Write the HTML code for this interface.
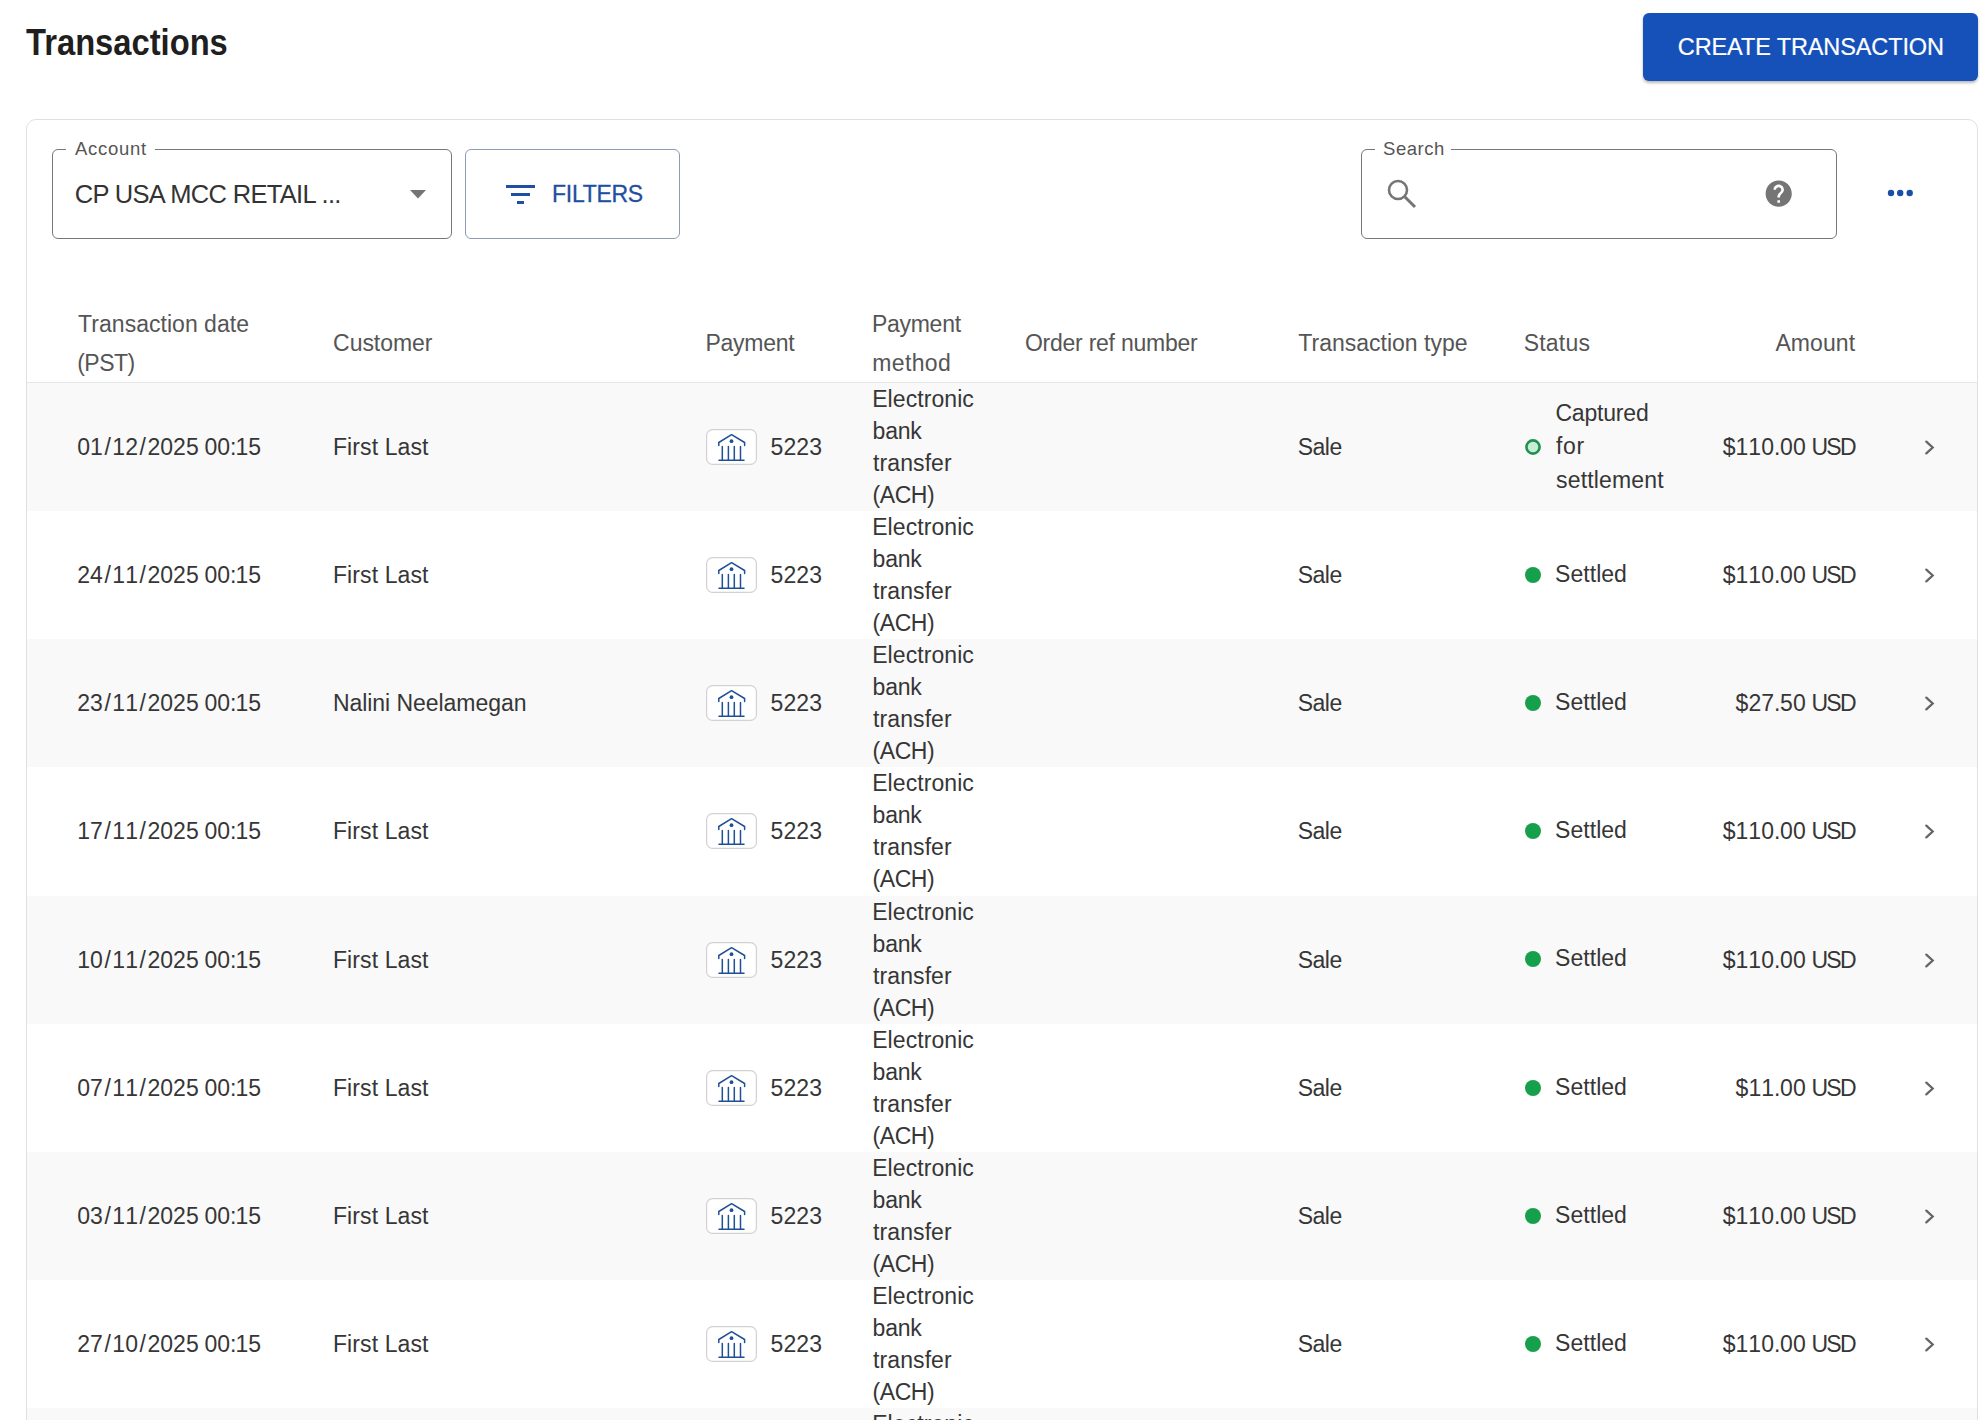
<!DOCTYPE html>
<html><head><meta charset="utf-8">
<style>
*{margin:0;padding:0;box-sizing:border-box}
html,body{width:1980px;height:1420px;overflow:hidden;background:#fff}
body{font-family:"Liberation Sans",sans-serif;color:#333;position:relative}
.a{position:absolute;white-space:nowrap}
</style></head><body>
<div class="a" style="left:25.60px;top:14.35px;font-size:36.5px;line-height:58px;color:#1f1f1f;font-weight:bold;transform:scaleX(0.8961);transform-origin:0.40px 0">Transactions</div>
<div class="a" style="left:1643px;top:13px;width:335px;height:68px;background:#1551b9;border-radius:6px;box-shadow:0 2px 3px rgba(0,0,0,.28)"></div>
<div class="a" style="left:1677.80px;top:27.85px;font-size:23.5px;line-height:38px;color:#fff;letter-spacing:-0.112px;-webkit-text-stroke:.2px #fff">CREATE TRANSACTION</div>
<div class="a" style="left:26px;top:119px;width:1952px;height:1400px;border:1px solid #e0e0e0;border-radius:10px;background:#fff"></div>
<div class="a" style="left:52px;top:149px;width:400px;height:90px;border:1.5px solid #777;border-radius:6px"></div>
<div class="a" style="left:66px;top:145px;width:89px;height:8px;background:#fff"></div>
<div class="a" style="left:75.00px;top:133.59px;font-size:18.5px;line-height:30px;color:#555;letter-spacing:0.733px">Account</div>
<div class="a" style="left:74.70px;top:173.66px;font-size:25.5px;line-height:41px;color:#333;letter-spacing:-0.670px">CP USA MCC RETAIL ...</div>
<svg class="a" style="left:410px;top:190px" width="16" height="9"><path d="M0 0H16L8 8.5Z" fill="#757575"/></svg>
<div class="a" style="left:465px;top:149px;width:215px;height:90px;border:1.5px solid #8c9cb2;border-radius:6px"></div>
<svg class="a" style="left:505px;top:184px" width="32" height="22"><g fill="#1f4fa0"><rect x="1" y="1" width="29" height="3"/><rect x="6" y="9" width="19" height="3"/><rect x="12" y="17" width="7" height="3"/></g></svg>
<div class="a" style="left:552.10px;top:175.53px;font-size:23px;line-height:37px;color:#1f4fa0;letter-spacing:-0.300px;-webkit-text-stroke:.3px #1f4fa0">FILTERS</div>
<div class="a" style="left:1361px;top:149px;width:476px;height:90px;border:1.5px solid #777;border-radius:6px"></div>
<div class="a" style="left:1375px;top:145px;width:76px;height:8px;background:#fff"></div>
<div class="a" style="left:1383.10px;top:133.59px;font-size:18.5px;line-height:30px;color:#555;letter-spacing:0.520px">Search</div>
<svg class="a" style="left:1385px;top:177px" width="34" height="34" viewBox="0 0 34 34"><circle cx="13" cy="13" r="9" fill="none" stroke="#757575" stroke-width="2.6"/><path d="M19.5 19.5L30 30" stroke="#757575" stroke-width="3"/></svg>
<svg class="a" style="left:1763.3px;top:178.3px" width="31.4" height="31.4" viewBox="0 0 24 24"><path fill="#757575" d="M12 2C6.48 2 2 6.48 2 12s4.48 10 10 10 10-4.48 10-10S17.52 2 12 2zm1 17h-2v-2h2v2zm2.07-7.75l-.9.92C13.45 12.9 13 13.5 13 15h-2v-.5c0-1.1.45-2.1 1.17-2.830l1.24-1.26c.37-.36.59-.86.59-1.41 0-1.1-.9-2-2-2s-2 .9-2 2H8c0-2.21 1.79-4 4-4s4 1.79 4 4c0 .88-.36 1.68-.93 2.25z"/></svg>
<svg class="a" style="left:1880px;top:185px" width="40" height="16"><g fill="#1a4fa8"><circle cx="11" cy="8" r="3.2"/><circle cx="20.2" cy="8" r="3.2"/><circle cx="29.7" cy="8" r="3.2"/></g></svg>
<div class="a" style="left:78.10px;top:305.53px;font-size:23px;line-height:37px;color:#555;letter-spacing:0.027px">Transaction date</div>
<div class="a" style="left:77.20px;top:344.53px;font-size:23px;line-height:37px;color:#555;letter-spacing:-0.525px">(PST)</div>
<div class="a" style="left:333.10px;top:324.53px;font-size:23px;line-height:37px;color:#555;letter-spacing:-0.043px">Customer</div>
<div class="a" style="left:705.50px;top:324.53px;font-size:23px;line-height:37px;color:#555;letter-spacing:-0.267px">Payment</div>
<div class="a" style="left:871.90px;top:305.53px;font-size:23px;line-height:37px;color:#555;letter-spacing:-0.267px">Payment</div>
<div class="a" style="left:872.30px;top:344.53px;font-size:23px;line-height:37px;color:#555;letter-spacing:0.360px">method</div>
<div class="a" style="left:1024.90px;top:324.53px;font-size:23px;line-height:37px;color:#555;letter-spacing:-0.240px">Order ref number</div>
<div class="a" style="left:1298.30px;top:324.53px;font-size:23px;line-height:37px;color:#555">Transaction type</div>
<div class="a" style="left:1523.70px;top:324.53px;font-size:23px;line-height:37px;color:#555;letter-spacing:0.200px">Status</div>
<div class="a" style="left:1775.40px;top:324.53px;font-size:23px;line-height:37px;color:#555;letter-spacing:0.080px">Amount</div>
<div class="a" style="left:27px;top:382px;width:1950px;height:1px;background:#e6e6e6"></div>
<div class="a" style="left:27px;top:383.0px;width:1950px;height:128px;background:#f9f9f9"></div>
<div class="a" style="left:77.20px;top:428.53px;font-size:23px;line-height:37px;color:#363636"><span style="display:inline-block;width:12.858px;text-align:center">0</span><span style="display:inline-block;width:12.858px;text-align:center">1</span><span style="display:inline-block;width:9.414px;text-align:center">/</span><span style="display:inline-block;width:12.858px;text-align:center">1</span><span style="display:inline-block;width:12.858px;text-align:center">2</span><span style="display:inline-block;width:9.414px;text-align:center">/</span><span style="display:inline-block;width:12.858px;text-align:center">2</span><span style="display:inline-block;width:12.858px;text-align:center">0</span><span style="display:inline-block;width:12.858px;text-align:center">2</span><span style="display:inline-block;width:12.858px;text-align:center">5</span><span style="display:inline-block;width:5.670px;text-align:center">&nbsp;</span><span style="display:inline-block;width:12.858px;text-align:center">0</span><span style="display:inline-block;width:12.858px;text-align:center">0</span><span style="display:inline-block;width:5.411px;text-align:center">:</span><span style="display:inline-block;width:12.858px;text-align:center">1</span><span style="display:inline-block;width:12.858px;text-align:center">5</span></div>
<div class="a" style="left:332.95px;top:428.53px;font-size:23px;line-height:37px;color:#363636;letter-spacing:0.111px">First Last</div>
<svg class="a" style="left:706px;top:429px" width="51" height="36" viewBox="0 0 51 36"><rect x="0.6" y="0.6" width="49.8" height="34.8" rx="6" fill="#fff" stroke="#d2d2d2" stroke-width="1.2"/><g fill="none" stroke="#1f4f96" stroke-width="1.5" stroke-linecap="round" stroke-linejoin="round"><path d="M12.8 16.6V13.5L25.6 5.7L38.6 13.5V16.6"/><path d="M13 31.3H38M16.3 17.6V31M22.4 17.6V31M28.3 17.6V31M34.5 17.6V31"/></g><circle cx="25.5" cy="12.2" r="1.9" fill="#1f4f96"/></svg>
<div class="a" style="left:770.60px;top:428.53px;font-size:23px;line-height:37px;color:#363636"><span style="display:inline-block;width:12.858px;text-align:center">5</span><span style="display:inline-block;width:12.858px;text-align:center">2</span><span style="display:inline-block;width:12.858px;text-align:center">2</span><span style="display:inline-block;width:12.858px;text-align:center">3</span></div>
<div class="a" style="left:872.20px;top:380.53px;font-size:23px;line-height:37px;color:#363636;letter-spacing:0.078px">Electronic</div>
<div class="a" style="left:872.60px;top:412.53px;font-size:23px;line-height:37px;color:#363636;letter-spacing:-0.200px">bank</div>
<div class="a" style="left:873.00px;top:444.53px;font-size:23px;line-height:37px;color:#363636;letter-spacing:0.100px">transfer</div>
<div class="a" style="left:872.60px;top:476.53px;font-size:23px;line-height:37px;color:#363636;letter-spacing:-0.475px">(ACH)</div>
<div class="a" style="left:1297.70px;top:428.53px;font-size:23px;line-height:37px;color:#363636;letter-spacing:-0.500px">Sale</div>
<svg class="a" style="left:1524px;top:438px" width="18" height="18"><circle cx="9" cy="9" r="6.6" fill="#c9ecd5" stroke="#1f9150" stroke-width="2.6"/></svg>
<div class="a" style="left:1555.40px;top:394.53px;font-size:23px;line-height:37px;color:#363636;letter-spacing:-0.186px">Captured</div>
<div class="a" style="left:1555.90px;top:427.53px;font-size:23px;line-height:37px;color:#363636;letter-spacing:0.700px">for</div>
<div class="a" style="left:1556.00px;top:461.53px;font-size:23px;line-height:37px;color:#363636;letter-spacing:0.167px">settlement</div>
<div class="a" style="left:1722.67px;top:428.53px;font-size:23px;line-height:37px;color:#363636"><span style="display:inline-block;width:12.858px;text-align:center">$</span><span style="display:inline-block;width:12.858px;text-align:center">1</span><span style="display:inline-block;width:12.858px;text-align:center">1</span><span style="display:inline-block;width:12.858px;text-align:center">0</span><span style="display:inline-block;width:6.027px;text-align:center">.</span><span style="display:inline-block;width:12.858px;text-align:center">0</span><span style="display:inline-block;width:12.858px;text-align:center">0</span><span style="display:inline-block;width:5.670px;text-align:center">&nbsp;</span><span style="display:inline-block;width:14.782px;text-align:center">U</span><span style="display:inline-block;width:13.777px;text-align:center">S</span><span style="display:inline-block;width:15.219px;text-align:center">D</span></div>
<svg class="a" style="left:1923px;top:439px" width="14" height="17"><path d="M3.3 2.6L9.7 8.5L3.3 14.4" fill="none" stroke="#666" stroke-width="2.3" stroke-linecap="round"/></svg>
<div class="a" style="left:77.20px;top:556.53px;font-size:23px;line-height:37px;color:#363636"><span style="display:inline-block;width:12.858px;text-align:center">2</span><span style="display:inline-block;width:12.858px;text-align:center">4</span><span style="display:inline-block;width:9.414px;text-align:center">/</span><span style="display:inline-block;width:12.858px;text-align:center">1</span><span style="display:inline-block;width:12.858px;text-align:center">1</span><span style="display:inline-block;width:9.414px;text-align:center">/</span><span style="display:inline-block;width:12.858px;text-align:center">2</span><span style="display:inline-block;width:12.858px;text-align:center">0</span><span style="display:inline-block;width:12.858px;text-align:center">2</span><span style="display:inline-block;width:12.858px;text-align:center">5</span><span style="display:inline-block;width:5.670px;text-align:center">&nbsp;</span><span style="display:inline-block;width:12.858px;text-align:center">0</span><span style="display:inline-block;width:12.858px;text-align:center">0</span><span style="display:inline-block;width:5.411px;text-align:center">:</span><span style="display:inline-block;width:12.858px;text-align:center">1</span><span style="display:inline-block;width:12.858px;text-align:center">5</span></div>
<div class="a" style="left:332.95px;top:556.53px;font-size:23px;line-height:37px;color:#363636;letter-spacing:0.111px">First Last</div>
<svg class="a" style="left:706px;top:557px" width="51" height="36" viewBox="0 0 51 36"><rect x="0.6" y="0.6" width="49.8" height="34.8" rx="6" fill="#fff" stroke="#d2d2d2" stroke-width="1.2"/><g fill="none" stroke="#1f4f96" stroke-width="1.5" stroke-linecap="round" stroke-linejoin="round"><path d="M12.8 16.6V13.5L25.6 5.7L38.6 13.5V16.6"/><path d="M13 31.3H38M16.3 17.6V31M22.4 17.6V31M28.3 17.6V31M34.5 17.6V31"/></g><circle cx="25.5" cy="12.2" r="1.9" fill="#1f4f96"/></svg>
<div class="a" style="left:770.60px;top:556.53px;font-size:23px;line-height:37px;color:#363636"><span style="display:inline-block;width:12.858px;text-align:center">5</span><span style="display:inline-block;width:12.858px;text-align:center">2</span><span style="display:inline-block;width:12.858px;text-align:center">2</span><span style="display:inline-block;width:12.858px;text-align:center">3</span></div>
<div class="a" style="left:872.20px;top:508.53px;font-size:23px;line-height:37px;color:#363636;letter-spacing:0.078px">Electronic</div>
<div class="a" style="left:872.60px;top:540.53px;font-size:23px;line-height:37px;color:#363636;letter-spacing:-0.200px">bank</div>
<div class="a" style="left:873.00px;top:572.53px;font-size:23px;line-height:37px;color:#363636;letter-spacing:0.100px">transfer</div>
<div class="a" style="left:872.60px;top:604.53px;font-size:23px;line-height:37px;color:#363636;letter-spacing:-0.475px">(ACH)</div>
<div class="a" style="left:1297.70px;top:556.53px;font-size:23px;line-height:37px;color:#363636;letter-spacing:-0.500px">Sale</div>
<svg class="a" style="left:1524px;top:566px" width="18" height="18"><circle cx="9" cy="9" r="8" fill="#17a04b"/></svg>
<div class="a" style="left:1555.10px;top:555.53px;font-size:23px;line-height:37px;color:#363636;letter-spacing:0.033px">Settled</div>
<div class="a" style="left:1722.67px;top:556.53px;font-size:23px;line-height:37px;color:#363636"><span style="display:inline-block;width:12.858px;text-align:center">$</span><span style="display:inline-block;width:12.858px;text-align:center">1</span><span style="display:inline-block;width:12.858px;text-align:center">1</span><span style="display:inline-block;width:12.858px;text-align:center">0</span><span style="display:inline-block;width:6.027px;text-align:center">.</span><span style="display:inline-block;width:12.858px;text-align:center">0</span><span style="display:inline-block;width:12.858px;text-align:center">0</span><span style="display:inline-block;width:5.670px;text-align:center">&nbsp;</span><span style="display:inline-block;width:14.782px;text-align:center">U</span><span style="display:inline-block;width:13.777px;text-align:center">S</span><span style="display:inline-block;width:15.219px;text-align:center">D</span></div>
<svg class="a" style="left:1923px;top:567px" width="14" height="17"><path d="M3.3 2.6L9.7 8.5L3.3 14.4" fill="none" stroke="#666" stroke-width="2.3" stroke-linecap="round"/></svg>
<div class="a" style="left:27px;top:639.25px;width:1950px;height:128px;background:#f9f9f9"></div>
<div class="a" style="left:77.20px;top:684.53px;font-size:23px;line-height:37px;color:#363636"><span style="display:inline-block;width:12.858px;text-align:center">2</span><span style="display:inline-block;width:12.858px;text-align:center">3</span><span style="display:inline-block;width:9.414px;text-align:center">/</span><span style="display:inline-block;width:12.858px;text-align:center">1</span><span style="display:inline-block;width:12.858px;text-align:center">1</span><span style="display:inline-block;width:9.414px;text-align:center">/</span><span style="display:inline-block;width:12.858px;text-align:center">2</span><span style="display:inline-block;width:12.858px;text-align:center">0</span><span style="display:inline-block;width:12.858px;text-align:center">2</span><span style="display:inline-block;width:12.858px;text-align:center">5</span><span style="display:inline-block;width:5.670px;text-align:center">&nbsp;</span><span style="display:inline-block;width:12.858px;text-align:center">0</span><span style="display:inline-block;width:12.858px;text-align:center">0</span><span style="display:inline-block;width:5.411px;text-align:center">:</span><span style="display:inline-block;width:12.858px;text-align:center">1</span><span style="display:inline-block;width:12.858px;text-align:center">5</span></div>
<div class="a" style="left:332.95px;top:684.53px;font-size:23px;line-height:37px;color:#363636;letter-spacing:-0.050px">Nalini Neelamegan</div>
<svg class="a" style="left:706px;top:685px" width="51" height="36" viewBox="0 0 51 36"><rect x="0.6" y="0.6" width="49.8" height="34.8" rx="6" fill="#fff" stroke="#d2d2d2" stroke-width="1.2"/><g fill="none" stroke="#1f4f96" stroke-width="1.5" stroke-linecap="round" stroke-linejoin="round"><path d="M12.8 16.6V13.5L25.6 5.7L38.6 13.5V16.6"/><path d="M13 31.3H38M16.3 17.6V31M22.4 17.6V31M28.3 17.6V31M34.5 17.6V31"/></g><circle cx="25.5" cy="12.2" r="1.9" fill="#1f4f96"/></svg>
<div class="a" style="left:770.60px;top:684.53px;font-size:23px;line-height:37px;color:#363636"><span style="display:inline-block;width:12.858px;text-align:center">5</span><span style="display:inline-block;width:12.858px;text-align:center">2</span><span style="display:inline-block;width:12.858px;text-align:center">2</span><span style="display:inline-block;width:12.858px;text-align:center">3</span></div>
<div class="a" style="left:872.20px;top:636.53px;font-size:23px;line-height:37px;color:#363636;letter-spacing:0.078px">Electronic</div>
<div class="a" style="left:872.60px;top:668.53px;font-size:23px;line-height:37px;color:#363636;letter-spacing:-0.200px">bank</div>
<div class="a" style="left:873.00px;top:700.53px;font-size:23px;line-height:37px;color:#363636;letter-spacing:0.100px">transfer</div>
<div class="a" style="left:872.60px;top:732.53px;font-size:23px;line-height:37px;color:#363636;letter-spacing:-0.475px">(ACH)</div>
<div class="a" style="left:1297.70px;top:684.53px;font-size:23px;line-height:37px;color:#363636;letter-spacing:-0.500px">Sale</div>
<svg class="a" style="left:1524px;top:694px" width="18" height="18"><circle cx="9" cy="9" r="8" fill="#17a04b"/></svg>
<div class="a" style="left:1555.10px;top:683.53px;font-size:23px;line-height:37px;color:#363636;letter-spacing:0.033px">Settled</div>
<div class="a" style="left:1735.53px;top:684.53px;font-size:23px;line-height:37px;color:#363636"><span style="display:inline-block;width:12.858px;text-align:center">$</span><span style="display:inline-block;width:12.858px;text-align:center">2</span><span style="display:inline-block;width:12.858px;text-align:center">7</span><span style="display:inline-block;width:6.027px;text-align:center">.</span><span style="display:inline-block;width:12.858px;text-align:center">5</span><span style="display:inline-block;width:12.858px;text-align:center">0</span><span style="display:inline-block;width:5.670px;text-align:center">&nbsp;</span><span style="display:inline-block;width:14.782px;text-align:center">U</span><span style="display:inline-block;width:13.777px;text-align:center">S</span><span style="display:inline-block;width:15.219px;text-align:center">D</span></div>
<svg class="a" style="left:1923px;top:695px" width="14" height="17"><path d="M3.3 2.6L9.7 8.5L3.3 14.4" fill="none" stroke="#666" stroke-width="2.3" stroke-linecap="round"/></svg>
<div class="a" style="left:77.20px;top:812.53px;font-size:23px;line-height:37px;color:#363636"><span style="display:inline-block;width:12.858px;text-align:center">1</span><span style="display:inline-block;width:12.858px;text-align:center">7</span><span style="display:inline-block;width:9.414px;text-align:center">/</span><span style="display:inline-block;width:12.858px;text-align:center">1</span><span style="display:inline-block;width:12.858px;text-align:center">1</span><span style="display:inline-block;width:9.414px;text-align:center">/</span><span style="display:inline-block;width:12.858px;text-align:center">2</span><span style="display:inline-block;width:12.858px;text-align:center">0</span><span style="display:inline-block;width:12.858px;text-align:center">2</span><span style="display:inline-block;width:12.858px;text-align:center">5</span><span style="display:inline-block;width:5.670px;text-align:center">&nbsp;</span><span style="display:inline-block;width:12.858px;text-align:center">0</span><span style="display:inline-block;width:12.858px;text-align:center">0</span><span style="display:inline-block;width:5.411px;text-align:center">:</span><span style="display:inline-block;width:12.858px;text-align:center">1</span><span style="display:inline-block;width:12.858px;text-align:center">5</span></div>
<div class="a" style="left:332.95px;top:812.53px;font-size:23px;line-height:37px;color:#363636;letter-spacing:0.111px">First Last</div>
<svg class="a" style="left:706px;top:813px" width="51" height="36" viewBox="0 0 51 36"><rect x="0.6" y="0.6" width="49.8" height="34.8" rx="6" fill="#fff" stroke="#d2d2d2" stroke-width="1.2"/><g fill="none" stroke="#1f4f96" stroke-width="1.5" stroke-linecap="round" stroke-linejoin="round"><path d="M12.8 16.6V13.5L25.6 5.7L38.6 13.5V16.6"/><path d="M13 31.3H38M16.3 17.6V31M22.4 17.6V31M28.3 17.6V31M34.5 17.6V31"/></g><circle cx="25.5" cy="12.2" r="1.9" fill="#1f4f96"/></svg>
<div class="a" style="left:770.60px;top:812.53px;font-size:23px;line-height:37px;color:#363636"><span style="display:inline-block;width:12.858px;text-align:center">5</span><span style="display:inline-block;width:12.858px;text-align:center">2</span><span style="display:inline-block;width:12.858px;text-align:center">2</span><span style="display:inline-block;width:12.858px;text-align:center">3</span></div>
<div class="a" style="left:872.20px;top:764.53px;font-size:23px;line-height:37px;color:#363636;letter-spacing:0.078px">Electronic</div>
<div class="a" style="left:872.60px;top:796.53px;font-size:23px;line-height:37px;color:#363636;letter-spacing:-0.200px">bank</div>
<div class="a" style="left:873.00px;top:828.53px;font-size:23px;line-height:37px;color:#363636;letter-spacing:0.100px">transfer</div>
<div class="a" style="left:872.60px;top:860.53px;font-size:23px;line-height:37px;color:#363636;letter-spacing:-0.475px">(ACH)</div>
<div class="a" style="left:1297.70px;top:812.53px;font-size:23px;line-height:37px;color:#363636;letter-spacing:-0.500px">Sale</div>
<svg class="a" style="left:1524px;top:822px" width="18" height="18"><circle cx="9" cy="9" r="8" fill="#17a04b"/></svg>
<div class="a" style="left:1555.10px;top:811.53px;font-size:23px;line-height:37px;color:#363636;letter-spacing:0.033px">Settled</div>
<div class="a" style="left:1722.67px;top:812.53px;font-size:23px;line-height:37px;color:#363636"><span style="display:inline-block;width:12.858px;text-align:center">$</span><span style="display:inline-block;width:12.858px;text-align:center">1</span><span style="display:inline-block;width:12.858px;text-align:center">1</span><span style="display:inline-block;width:12.858px;text-align:center">0</span><span style="display:inline-block;width:6.027px;text-align:center">.</span><span style="display:inline-block;width:12.858px;text-align:center">0</span><span style="display:inline-block;width:12.858px;text-align:center">0</span><span style="display:inline-block;width:5.670px;text-align:center">&nbsp;</span><span style="display:inline-block;width:14.782px;text-align:center">U</span><span style="display:inline-block;width:13.777px;text-align:center">S</span><span style="display:inline-block;width:15.219px;text-align:center">D</span></div>
<svg class="a" style="left:1923px;top:823px" width="14" height="17"><path d="M3.3 2.6L9.7 8.5L3.3 14.4" fill="none" stroke="#666" stroke-width="2.3" stroke-linecap="round"/></svg>
<div class="a" style="left:27px;top:895.5px;width:1950px;height:128px;background:#f9f9f9"></div>
<div class="a" style="left:77.20px;top:941.53px;font-size:23px;line-height:37px;color:#363636"><span style="display:inline-block;width:12.858px;text-align:center">1</span><span style="display:inline-block;width:12.858px;text-align:center">0</span><span style="display:inline-block;width:9.414px;text-align:center">/</span><span style="display:inline-block;width:12.858px;text-align:center">1</span><span style="display:inline-block;width:12.858px;text-align:center">1</span><span style="display:inline-block;width:9.414px;text-align:center">/</span><span style="display:inline-block;width:12.858px;text-align:center">2</span><span style="display:inline-block;width:12.858px;text-align:center">0</span><span style="display:inline-block;width:12.858px;text-align:center">2</span><span style="display:inline-block;width:12.858px;text-align:center">5</span><span style="display:inline-block;width:5.670px;text-align:center">&nbsp;</span><span style="display:inline-block;width:12.858px;text-align:center">0</span><span style="display:inline-block;width:12.858px;text-align:center">0</span><span style="display:inline-block;width:5.411px;text-align:center">:</span><span style="display:inline-block;width:12.858px;text-align:center">1</span><span style="display:inline-block;width:12.858px;text-align:center">5</span></div>
<div class="a" style="left:332.95px;top:941.53px;font-size:23px;line-height:37px;color:#363636;letter-spacing:0.111px">First Last</div>
<svg class="a" style="left:706px;top:942px" width="51" height="36" viewBox="0 0 51 36"><rect x="0.6" y="0.6" width="49.8" height="34.8" rx="6" fill="#fff" stroke="#d2d2d2" stroke-width="1.2"/><g fill="none" stroke="#1f4f96" stroke-width="1.5" stroke-linecap="round" stroke-linejoin="round"><path d="M12.8 16.6V13.5L25.6 5.7L38.6 13.5V16.6"/><path d="M13 31.3H38M16.3 17.6V31M22.4 17.6V31M28.3 17.6V31M34.5 17.6V31"/></g><circle cx="25.5" cy="12.2" r="1.9" fill="#1f4f96"/></svg>
<div class="a" style="left:770.60px;top:941.53px;font-size:23px;line-height:37px;color:#363636"><span style="display:inline-block;width:12.858px;text-align:center">5</span><span style="display:inline-block;width:12.858px;text-align:center">2</span><span style="display:inline-block;width:12.858px;text-align:center">2</span><span style="display:inline-block;width:12.858px;text-align:center">3</span></div>
<div class="a" style="left:872.20px;top:893.53px;font-size:23px;line-height:37px;color:#363636;letter-spacing:0.078px">Electronic</div>
<div class="a" style="left:872.60px;top:925.53px;font-size:23px;line-height:37px;color:#363636;letter-spacing:-0.200px">bank</div>
<div class="a" style="left:873.00px;top:957.53px;font-size:23px;line-height:37px;color:#363636;letter-spacing:0.100px">transfer</div>
<div class="a" style="left:872.60px;top:989.53px;font-size:23px;line-height:37px;color:#363636;letter-spacing:-0.475px">(ACH)</div>
<div class="a" style="left:1297.70px;top:941.53px;font-size:23px;line-height:37px;color:#363636;letter-spacing:-0.500px">Sale</div>
<svg class="a" style="left:1524px;top:950px" width="18" height="18"><circle cx="9" cy="9" r="8" fill="#17a04b"/></svg>
<div class="a" style="left:1555.10px;top:939.53px;font-size:23px;line-height:37px;color:#363636;letter-spacing:0.033px">Settled</div>
<div class="a" style="left:1722.67px;top:941.53px;font-size:23px;line-height:37px;color:#363636"><span style="display:inline-block;width:12.858px;text-align:center">$</span><span style="display:inline-block;width:12.858px;text-align:center">1</span><span style="display:inline-block;width:12.858px;text-align:center">1</span><span style="display:inline-block;width:12.858px;text-align:center">0</span><span style="display:inline-block;width:6.027px;text-align:center">.</span><span style="display:inline-block;width:12.858px;text-align:center">0</span><span style="display:inline-block;width:12.858px;text-align:center">0</span><span style="display:inline-block;width:5.670px;text-align:center">&nbsp;</span><span style="display:inline-block;width:14.782px;text-align:center">U</span><span style="display:inline-block;width:13.777px;text-align:center">S</span><span style="display:inline-block;width:15.219px;text-align:center">D</span></div>
<svg class="a" style="left:1923px;top:952px" width="14" height="17"><path d="M3.3 2.6L9.7 8.5L3.3 14.4" fill="none" stroke="#666" stroke-width="2.3" stroke-linecap="round"/></svg>
<div class="a" style="left:77.20px;top:1069.53px;font-size:23px;line-height:37px;color:#363636"><span style="display:inline-block;width:12.858px;text-align:center">0</span><span style="display:inline-block;width:12.858px;text-align:center">7</span><span style="display:inline-block;width:9.414px;text-align:center">/</span><span style="display:inline-block;width:12.858px;text-align:center">1</span><span style="display:inline-block;width:12.858px;text-align:center">1</span><span style="display:inline-block;width:9.414px;text-align:center">/</span><span style="display:inline-block;width:12.858px;text-align:center">2</span><span style="display:inline-block;width:12.858px;text-align:center">0</span><span style="display:inline-block;width:12.858px;text-align:center">2</span><span style="display:inline-block;width:12.858px;text-align:center">5</span><span style="display:inline-block;width:5.670px;text-align:center">&nbsp;</span><span style="display:inline-block;width:12.858px;text-align:center">0</span><span style="display:inline-block;width:12.858px;text-align:center">0</span><span style="display:inline-block;width:5.411px;text-align:center">:</span><span style="display:inline-block;width:12.858px;text-align:center">1</span><span style="display:inline-block;width:12.858px;text-align:center">5</span></div>
<div class="a" style="left:332.95px;top:1069.53px;font-size:23px;line-height:37px;color:#363636;letter-spacing:0.111px">First Last</div>
<svg class="a" style="left:706px;top:1070px" width="51" height="36" viewBox="0 0 51 36"><rect x="0.6" y="0.6" width="49.8" height="34.8" rx="6" fill="#fff" stroke="#d2d2d2" stroke-width="1.2"/><g fill="none" stroke="#1f4f96" stroke-width="1.5" stroke-linecap="round" stroke-linejoin="round"><path d="M12.8 16.6V13.5L25.6 5.7L38.6 13.5V16.6"/><path d="M13 31.3H38M16.3 17.6V31M22.4 17.6V31M28.3 17.6V31M34.5 17.6V31"/></g><circle cx="25.5" cy="12.2" r="1.9" fill="#1f4f96"/></svg>
<div class="a" style="left:770.60px;top:1069.53px;font-size:23px;line-height:37px;color:#363636"><span style="display:inline-block;width:12.858px;text-align:center">5</span><span style="display:inline-block;width:12.858px;text-align:center">2</span><span style="display:inline-block;width:12.858px;text-align:center">2</span><span style="display:inline-block;width:12.858px;text-align:center">3</span></div>
<div class="a" style="left:872.20px;top:1021.53px;font-size:23px;line-height:37px;color:#363636;letter-spacing:0.078px">Electronic</div>
<div class="a" style="left:872.60px;top:1053.53px;font-size:23px;line-height:37px;color:#363636;letter-spacing:-0.200px">bank</div>
<div class="a" style="left:873.00px;top:1085.53px;font-size:23px;line-height:37px;color:#363636;letter-spacing:0.100px">transfer</div>
<div class="a" style="left:872.60px;top:1117.53px;font-size:23px;line-height:37px;color:#363636;letter-spacing:-0.475px">(ACH)</div>
<div class="a" style="left:1297.70px;top:1069.53px;font-size:23px;line-height:37px;color:#363636;letter-spacing:-0.500px">Sale</div>
<svg class="a" style="left:1524px;top:1079px" width="18" height="18"><circle cx="9" cy="9" r="8" fill="#17a04b"/></svg>
<div class="a" style="left:1555.10px;top:1068.53px;font-size:23px;line-height:37px;color:#363636;letter-spacing:0.033px">Settled</div>
<div class="a" style="left:1735.53px;top:1069.53px;font-size:23px;line-height:37px;color:#363636"><span style="display:inline-block;width:12.858px;text-align:center">$</span><span style="display:inline-block;width:12.858px;text-align:center">1</span><span style="display:inline-block;width:12.858px;text-align:center">1</span><span style="display:inline-block;width:6.027px;text-align:center">.</span><span style="display:inline-block;width:12.858px;text-align:center">0</span><span style="display:inline-block;width:12.858px;text-align:center">0</span><span style="display:inline-block;width:5.670px;text-align:center">&nbsp;</span><span style="display:inline-block;width:14.782px;text-align:center">U</span><span style="display:inline-block;width:13.777px;text-align:center">S</span><span style="display:inline-block;width:15.219px;text-align:center">D</span></div>
<svg class="a" style="left:1923px;top:1080px" width="14" height="17"><path d="M3.3 2.6L9.7 8.5L3.3 14.4" fill="none" stroke="#666" stroke-width="2.3" stroke-linecap="round"/></svg>
<div class="a" style="left:27px;top:1151.75px;width:1950px;height:128px;background:#f9f9f9"></div>
<div class="a" style="left:77.20px;top:1197.53px;font-size:23px;line-height:37px;color:#363636"><span style="display:inline-block;width:12.858px;text-align:center">0</span><span style="display:inline-block;width:12.858px;text-align:center">3</span><span style="display:inline-block;width:9.414px;text-align:center">/</span><span style="display:inline-block;width:12.858px;text-align:center">1</span><span style="display:inline-block;width:12.858px;text-align:center">1</span><span style="display:inline-block;width:9.414px;text-align:center">/</span><span style="display:inline-block;width:12.858px;text-align:center">2</span><span style="display:inline-block;width:12.858px;text-align:center">0</span><span style="display:inline-block;width:12.858px;text-align:center">2</span><span style="display:inline-block;width:12.858px;text-align:center">5</span><span style="display:inline-block;width:5.670px;text-align:center">&nbsp;</span><span style="display:inline-block;width:12.858px;text-align:center">0</span><span style="display:inline-block;width:12.858px;text-align:center">0</span><span style="display:inline-block;width:5.411px;text-align:center">:</span><span style="display:inline-block;width:12.858px;text-align:center">1</span><span style="display:inline-block;width:12.858px;text-align:center">5</span></div>
<div class="a" style="left:332.95px;top:1197.53px;font-size:23px;line-height:37px;color:#363636;letter-spacing:0.111px">First Last</div>
<svg class="a" style="left:706px;top:1198px" width="51" height="36" viewBox="0 0 51 36"><rect x="0.6" y="0.6" width="49.8" height="34.8" rx="6" fill="#fff" stroke="#d2d2d2" stroke-width="1.2"/><g fill="none" stroke="#1f4f96" stroke-width="1.5" stroke-linecap="round" stroke-linejoin="round"><path d="M12.8 16.6V13.5L25.6 5.7L38.6 13.5V16.6"/><path d="M13 31.3H38M16.3 17.6V31M22.4 17.6V31M28.3 17.6V31M34.5 17.6V31"/></g><circle cx="25.5" cy="12.2" r="1.9" fill="#1f4f96"/></svg>
<div class="a" style="left:770.60px;top:1197.53px;font-size:23px;line-height:37px;color:#363636"><span style="display:inline-block;width:12.858px;text-align:center">5</span><span style="display:inline-block;width:12.858px;text-align:center">2</span><span style="display:inline-block;width:12.858px;text-align:center">2</span><span style="display:inline-block;width:12.858px;text-align:center">3</span></div>
<div class="a" style="left:872.20px;top:1149.53px;font-size:23px;line-height:37px;color:#363636;letter-spacing:0.078px">Electronic</div>
<div class="a" style="left:872.60px;top:1181.53px;font-size:23px;line-height:37px;color:#363636;letter-spacing:-0.200px">bank</div>
<div class="a" style="left:873.00px;top:1213.53px;font-size:23px;line-height:37px;color:#363636;letter-spacing:0.100px">transfer</div>
<div class="a" style="left:872.60px;top:1245.53px;font-size:23px;line-height:37px;color:#363636;letter-spacing:-0.475px">(ACH)</div>
<div class="a" style="left:1297.70px;top:1197.53px;font-size:23px;line-height:37px;color:#363636;letter-spacing:-0.500px">Sale</div>
<svg class="a" style="left:1524px;top:1207px" width="18" height="18"><circle cx="9" cy="9" r="8" fill="#17a04b"/></svg>
<div class="a" style="left:1555.10px;top:1196.53px;font-size:23px;line-height:37px;color:#363636;letter-spacing:0.033px">Settled</div>
<div class="a" style="left:1722.67px;top:1197.53px;font-size:23px;line-height:37px;color:#363636"><span style="display:inline-block;width:12.858px;text-align:center">$</span><span style="display:inline-block;width:12.858px;text-align:center">1</span><span style="display:inline-block;width:12.858px;text-align:center">1</span><span style="display:inline-block;width:12.858px;text-align:center">0</span><span style="display:inline-block;width:6.027px;text-align:center">.</span><span style="display:inline-block;width:12.858px;text-align:center">0</span><span style="display:inline-block;width:12.858px;text-align:center">0</span><span style="display:inline-block;width:5.670px;text-align:center">&nbsp;</span><span style="display:inline-block;width:14.782px;text-align:center">U</span><span style="display:inline-block;width:13.777px;text-align:center">S</span><span style="display:inline-block;width:15.219px;text-align:center">D</span></div>
<svg class="a" style="left:1923px;top:1208px" width="14" height="17"><path d="M3.3 2.6L9.7 8.5L3.3 14.4" fill="none" stroke="#666" stroke-width="2.3" stroke-linecap="round"/></svg>
<div class="a" style="left:77.20px;top:1325.53px;font-size:23px;line-height:37px;color:#363636"><span style="display:inline-block;width:12.858px;text-align:center">2</span><span style="display:inline-block;width:12.858px;text-align:center">7</span><span style="display:inline-block;width:9.414px;text-align:center">/</span><span style="display:inline-block;width:12.858px;text-align:center">1</span><span style="display:inline-block;width:12.858px;text-align:center">0</span><span style="display:inline-block;width:9.414px;text-align:center">/</span><span style="display:inline-block;width:12.858px;text-align:center">2</span><span style="display:inline-block;width:12.858px;text-align:center">0</span><span style="display:inline-block;width:12.858px;text-align:center">2</span><span style="display:inline-block;width:12.858px;text-align:center">5</span><span style="display:inline-block;width:5.670px;text-align:center">&nbsp;</span><span style="display:inline-block;width:12.858px;text-align:center">0</span><span style="display:inline-block;width:12.858px;text-align:center">0</span><span style="display:inline-block;width:5.411px;text-align:center">:</span><span style="display:inline-block;width:12.858px;text-align:center">1</span><span style="display:inline-block;width:12.858px;text-align:center">5</span></div>
<div class="a" style="left:332.95px;top:1325.53px;font-size:23px;line-height:37px;color:#363636;letter-spacing:0.111px">First Last</div>
<svg class="a" style="left:706px;top:1326px" width="51" height="36" viewBox="0 0 51 36"><rect x="0.6" y="0.6" width="49.8" height="34.8" rx="6" fill="#fff" stroke="#d2d2d2" stroke-width="1.2"/><g fill="none" stroke="#1f4f96" stroke-width="1.5" stroke-linecap="round" stroke-linejoin="round"><path d="M12.8 16.6V13.5L25.6 5.7L38.6 13.5V16.6"/><path d="M13 31.3H38M16.3 17.6V31M22.4 17.6V31M28.3 17.6V31M34.5 17.6V31"/></g><circle cx="25.5" cy="12.2" r="1.9" fill="#1f4f96"/></svg>
<div class="a" style="left:770.60px;top:1325.53px;font-size:23px;line-height:37px;color:#363636"><span style="display:inline-block;width:12.858px;text-align:center">5</span><span style="display:inline-block;width:12.858px;text-align:center">2</span><span style="display:inline-block;width:12.858px;text-align:center">2</span><span style="display:inline-block;width:12.858px;text-align:center">3</span></div>
<div class="a" style="left:872.20px;top:1277.53px;font-size:23px;line-height:37px;color:#363636;letter-spacing:0.078px">Electronic</div>
<div class="a" style="left:872.60px;top:1309.53px;font-size:23px;line-height:37px;color:#363636;letter-spacing:-0.200px">bank</div>
<div class="a" style="left:873.00px;top:1341.53px;font-size:23px;line-height:37px;color:#363636;letter-spacing:0.100px">transfer</div>
<div class="a" style="left:872.60px;top:1373.53px;font-size:23px;line-height:37px;color:#363636;letter-spacing:-0.475px">(ACH)</div>
<div class="a" style="left:1297.70px;top:1325.53px;font-size:23px;line-height:37px;color:#363636;letter-spacing:-0.500px">Sale</div>
<svg class="a" style="left:1524px;top:1335px" width="18" height="18"><circle cx="9" cy="9" r="8" fill="#17a04b"/></svg>
<div class="a" style="left:1555.10px;top:1324.53px;font-size:23px;line-height:37px;color:#363636;letter-spacing:0.033px">Settled</div>
<div class="a" style="left:1722.67px;top:1325.53px;font-size:23px;line-height:37px;color:#363636"><span style="display:inline-block;width:12.858px;text-align:center">$</span><span style="display:inline-block;width:12.858px;text-align:center">1</span><span style="display:inline-block;width:12.858px;text-align:center">1</span><span style="display:inline-block;width:12.858px;text-align:center">0</span><span style="display:inline-block;width:6.027px;text-align:center">.</span><span style="display:inline-block;width:12.858px;text-align:center">0</span><span style="display:inline-block;width:12.858px;text-align:center">0</span><span style="display:inline-block;width:5.670px;text-align:center">&nbsp;</span><span style="display:inline-block;width:14.782px;text-align:center">U</span><span style="display:inline-block;width:13.777px;text-align:center">S</span><span style="display:inline-block;width:15.219px;text-align:center">D</span></div>
<svg class="a" style="left:1923px;top:1336px" width="14" height="17"><path d="M3.3 2.6L9.7 8.5L3.3 14.4" fill="none" stroke="#666" stroke-width="2.3" stroke-linecap="round"/></svg>
<div class="a" style="left:27px;top:1408.0px;width:1950px;height:128px;background:#f9f9f9"></div>
<div class="a" style="left:77.20px;top:1453.53px;font-size:23px;line-height:37px;color:#363636"><span style="display:inline-block;width:12.858px;text-align:center">2</span><span style="display:inline-block;width:12.858px;text-align:center">0</span><span style="display:inline-block;width:9.414px;text-align:center">/</span><span style="display:inline-block;width:12.858px;text-align:center">1</span><span style="display:inline-block;width:12.858px;text-align:center">0</span><span style="display:inline-block;width:9.414px;text-align:center">/</span><span style="display:inline-block;width:12.858px;text-align:center">2</span><span style="display:inline-block;width:12.858px;text-align:center">0</span><span style="display:inline-block;width:12.858px;text-align:center">2</span><span style="display:inline-block;width:12.858px;text-align:center">5</span><span style="display:inline-block;width:5.670px;text-align:center">&nbsp;</span><span style="display:inline-block;width:12.858px;text-align:center">0</span><span style="display:inline-block;width:12.858px;text-align:center">0</span><span style="display:inline-block;width:5.411px;text-align:center">:</span><span style="display:inline-block;width:12.858px;text-align:center">1</span><span style="display:inline-block;width:12.858px;text-align:center">5</span></div>
<div class="a" style="left:332.95px;top:1453.53px;font-size:23px;line-height:37px;color:#363636;letter-spacing:0.111px">First Last</div>
<svg class="a" style="left:706px;top:1454px" width="51" height="36" viewBox="0 0 51 36"><rect x="0.6" y="0.6" width="49.8" height="34.8" rx="6" fill="#fff" stroke="#d2d2d2" stroke-width="1.2"/><g fill="none" stroke="#1f4f96" stroke-width="1.5" stroke-linecap="round" stroke-linejoin="round"><path d="M12.8 16.6V13.5L25.6 5.7L38.6 13.5V16.6"/><path d="M13 31.3H38M16.3 17.6V31M22.4 17.6V31M28.3 17.6V31M34.5 17.6V31"/></g><circle cx="25.5" cy="12.2" r="1.9" fill="#1f4f96"/></svg>
<div class="a" style="left:770.60px;top:1453.53px;font-size:23px;line-height:37px;color:#363636"><span style="display:inline-block;width:12.858px;text-align:center">5</span><span style="display:inline-block;width:12.858px;text-align:center">2</span><span style="display:inline-block;width:12.858px;text-align:center">2</span><span style="display:inline-block;width:12.858px;text-align:center">3</span></div>
<div class="a" style="left:872.20px;top:1405.53px;font-size:23px;line-height:37px;color:#363636;letter-spacing:0.078px">Electronic</div>
<div class="a" style="left:872.60px;top:1437.53px;font-size:23px;line-height:37px;color:#363636;letter-spacing:-0.200px">bank</div>
<div class="a" style="left:873.00px;top:1469.53px;font-size:23px;line-height:37px;color:#363636;letter-spacing:0.100px">transfer</div>
<div class="a" style="left:872.60px;top:1501.53px;font-size:23px;line-height:37px;color:#363636;letter-spacing:-0.475px">(ACH)</div>
<div class="a" style="left:1297.70px;top:1453.53px;font-size:23px;line-height:37px;color:#363636;letter-spacing:-0.500px">Sale</div>
<svg class="a" style="left:1524px;top:1463px" width="18" height="18"><circle cx="9" cy="9" r="8" fill="#17a04b"/></svg>
<div class="a" style="left:1555.10px;top:1452.53px;font-size:23px;line-height:37px;color:#363636;letter-spacing:0.033px">Settled</div>
<div class="a" style="left:1722.67px;top:1453.53px;font-size:23px;line-height:37px;color:#363636"><span style="display:inline-block;width:12.858px;text-align:center">$</span><span style="display:inline-block;width:12.858px;text-align:center">1</span><span style="display:inline-block;width:12.858px;text-align:center">1</span><span style="display:inline-block;width:12.858px;text-align:center">0</span><span style="display:inline-block;width:6.027px;text-align:center">.</span><span style="display:inline-block;width:12.858px;text-align:center">0</span><span style="display:inline-block;width:12.858px;text-align:center">0</span><span style="display:inline-block;width:5.670px;text-align:center">&nbsp;</span><span style="display:inline-block;width:14.782px;text-align:center">U</span><span style="display:inline-block;width:13.777px;text-align:center">S</span><span style="display:inline-block;width:15.219px;text-align:center">D</span></div>
<svg class="a" style="left:1923px;top:1464px" width="14" height="17"><path d="M3.3 2.6L9.7 8.5L3.3 14.4" fill="none" stroke="#666" stroke-width="2.3" stroke-linecap="round"/></svg>
</body></html>
